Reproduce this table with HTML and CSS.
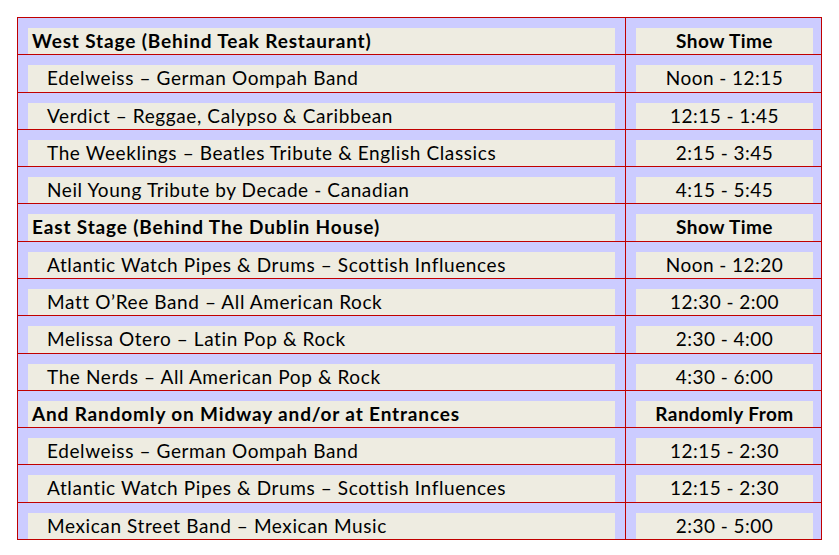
FILE: index.html
```html
<!DOCTYPE html>
<html>
<head>
<meta charset="utf-8">
<link rel="stylesheet" href="styles.css">
</head>
<body>
<div class="schedule">
  <div class="cell"><span class="box head left">West Stage (Behind Teak Restaurant)</span></div>
  <div class="cell rc"><span class="box head center">Show Time</span></div>
  <div class="cell"><span class="box item">Edelweiss – German Oompah Band</span></div>
  <div class="cell rc"><span class="box center">Noon - 12:15</span></div>
  <div class="cell"><span class="box item">Verdict – Reggae, Calypso &amp; Caribbean</span></div>
  <div class="cell rc"><span class="box center">12:15 - 1:45</span></div>
  <div class="cell"><span class="box item">The Weeklings – Beatles Tribute &amp; English Classics</span></div>
  <div class="cell rc"><span class="box center">2:15 - 3:45</span></div>
  <div class="cell"><span class="box item">Neil Young Tribute by Decade - Canadian</span></div>
  <div class="cell rc"><span class="box center">4:15 - 5:45</span></div>
  <div class="cell"><span class="box head left">East Stage (Behind The Dublin House)</span></div>
  <div class="cell rc"><span class="box head center">Show Time</span></div>
  <div class="cell"><span class="box item">Atlantic Watch Pipes &amp; Drums – Scottish Influences</span></div>
  <div class="cell rc"><span class="box center">Noon - 12:20</span></div>
  <div class="cell"><span class="box item">Matt O’Ree Band – All American Rock</span></div>
  <div class="cell rc"><span class="box center">12:30 - 2:00</span></div>
  <div class="cell"><span class="box item">Melissa Otero – Latin Pop &amp; Rock</span></div>
  <div class="cell rc"><span class="box center">2:30 - 4:00</span></div>
  <div class="cell"><span class="box item">The Nerds – All American Pop &amp; Rock</span></div>
  <div class="cell rc"><span class="box center">4:30 - 6:00</span></div>
  <div class="cell"><span class="box head left">And Randomly on Midway and/or at Entrances</span></div>
  <div class="cell rc"><span class="box head center">Randomly From</span></div>
  <div class="cell"><span class="box item">Edelweiss – German Oompah Band</span></div>
  <div class="cell rc"><span class="box center">12:15 - 2:30</span></div>
  <div class="cell"><span class="box item">Atlantic Watch Pipes &amp; Drums – Scottish Influences</span></div>
  <div class="cell rc"><span class="box center">12:15 - 2:30</span></div>
  <div class="cell"><span class="box item">Mexican Street Band – Mexican Music</span></div>
  <div class="cell rc"><span class="box center">2:30 - 5:00</span></div>
</div>
</body>
</html>
```
FILE: styles.css
```css
html, body {
  margin: 0;
  padding: 0;
  background: #ffffff;
}
body {
  padding: 17px 0 0 17px;
  font-family: Lato, "Liberation Sans", sans-serif;
  color: #000;
}
.schedule {
  display: grid;
  grid-template-columns: 607px 195px;
  grid-template-rows: repeat(14, 1fr);
  gap: 1px;
  padding: 1px;
  width: 805px;
  height: 523px;
  box-sizing: border-box;
  background: #c00000;
}
.cell {
  background: #ccccff;
  padding: 10px 10px 0 10px;
  display: flex;
  flex-direction: column;
}
.cell.rc {
  padding-right: 8px;
}
.box {
  display: block;
  flex: 1;
  background: #eeece1;
  font-size: 19px;
  line-height: 26px;
  letter-spacing: 0.6px;
  white-space: nowrap;
  overflow: hidden;
}
.head {
  font-weight: bold;
  letter-spacing: 0.85px;
}
.left {
  padding-left: 4px;
}
.item {
  padding-left: 19px;
}
.center {
  text-align: center;
  letter-spacing: 0.45px;
}
```
